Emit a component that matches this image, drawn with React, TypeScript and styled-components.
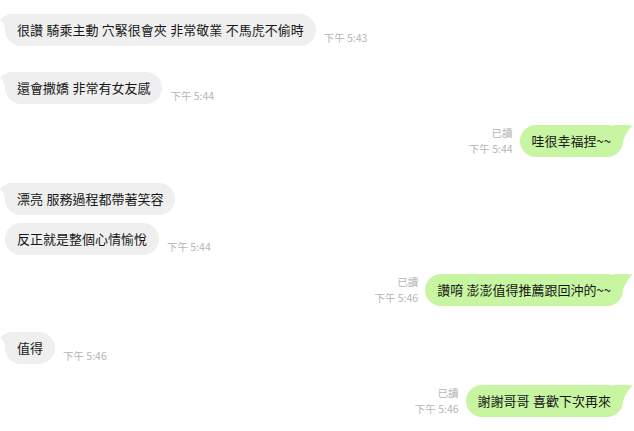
import styled, { createGlobalStyle } from "styled-components";

const GlobalStyle = createGlobalStyle`
    html, body {
        margin: 0;
        padding: 0;
        background: #ffffff;
    }
    body {
        font-family: "Noto Sans CJK TC", "Noto Sans", sans-serif;
    }
`;

type Side = "left" | "right";

interface Message {
    side: Side;
    text: string;
    time?: string;
    tail?: boolean;
    gap: number;
}

const messages: Message[] = [
    { side: "left", text: "很讚 騎乘主動 穴緊很會夾 非常敬業 不馬虎不偷時", time: "下午 5:43", tail: true, gap: 14 },
    { side: "left", text: "還會撒嬌 非常有女友感", time: "下午 5:44", tail: true, gap: 26 },
    { side: "right", text: "哇很幸福捏~~", time: "下午 5:44", tail: true, gap: 21 },
    { side: "left", text: "漂亮 服務過程都帶著笑容", tail: true, gap: 26 },
    { side: "left", text: "反正就是整個心情愉悅", time: "下午 5:44", gap: 8 },
    { side: "right", text: "讚唷 澎澎值得推薦跟回沖的~~", time: "下午 5:46", tail: true, gap: 19 },
    { side: "left", text: "值得", time: "下午 5:46", tail: true, gap: 26 },
    { side: "right", text: "謝謝哥哥 喜歡下次再來", time: "下午 5:46", tail: true, gap: 21 },
];

const LEFT_BG = "#efefef";
const RIGHT_BG = "#c7f5a1";

const Chat = styled.div`
    display: flex;
    flex-direction: column;
    width: 634px;
    height: 431px;
    overflow: hidden;
    box-sizing: border-box;
`;

const Row = styled.div<{ $side: Side; $gap: number }>`
    display: flex;
    flex-direction: ${p => p.$side === "left" ? "row" : "row-reverse"};
    align-items: flex-end;
    gap: ${p => p.$side === "left" ? 8 : 7}px;
    margin-top: ${p => p.$gap}px;
    padding: ${p => p.$side === "left" ? "0 0 0 5px" : "0 11px 0 0"};
`;

const Bubble = styled.div<{ $side: Side }>`
    position: relative;
    height: 32px;
    line-height: 32px;
    padding: 0 12px;
    border-radius: 16px;
    font-size: 13px;
    word-spacing: 0.5px;
    color: #161616;
    white-space: nowrap;
    background: ${p => p.$side === "left" ? LEFT_BG : RIGHT_BG};
`;

const Label = styled.span`
    position: relative;
`;

const Tail = styled.svg<{ $side: Side }>`
    position: absolute;
    top: 0;
    width: 20px;
    height: 18px;
    ${p => p.$side === "left" ? "left: -5px;" : "right: -10px;"}
`;

const Meta = styled.div<{ $side: Side }>`
    display: flex;
    flex-direction: column;
    align-items: ${p => p.$side === "left" ? "flex-start" : "flex-end"};
    font-size: 10.5px;
    line-height: 15.5px;
    color: #b5b5b5;
    margin-bottom: 1px;
    white-space: nowrap;
`;

function BubbleTail({ side }: { side: Side }) {
    if (side === "left") {
        return <Tail $side="left" viewBox="0 0 20 18">
            <path d="M20 0 L9 0 Q4 2 0 6 Q3 8 4 11 Q5 13.5 5 16 L20 16 Z" fill={LEFT_BG} />
        </Tail>;
    }
    return <Tail $side="right" viewBox="0 0 20 18">
        <path d="M0 0 L12 0 Q16 0 19.5 0.5 Q17 3 15 6 Q12 10 10 16 L0 16 Z" fill={RIGHT_BG} />
    </Tail>;
}

export default function App() {
    return <>
        <GlobalStyle />
        <Chat>
            {messages.map((m, i) => <Row key={i} $side={m.side} $gap={m.gap}>
                <Bubble $side={m.side}>
                    {m.tail && <BubbleTail side={m.side} />}
                    <Label>{m.text}</Label>
                </Bubble>
                {m.time && <Meta $side={m.side}>
                    {m.side === "right" && <span>已讀</span>}
                    <span>{m.time}</span>
                </Meta>}
            </Row>)}
        </Chat>
    </>;
}
